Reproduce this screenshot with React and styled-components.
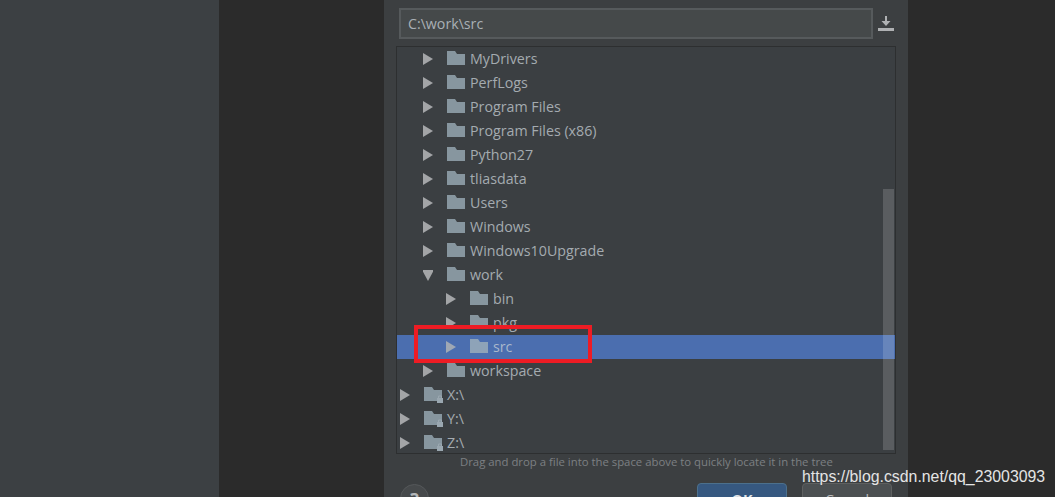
import React from "react";
import styled, { createGlobalStyle } from "styled-components";

const treeRows = [
    { name: "MyDrivers", depth: 1 },
    { name: "PerfLogs", depth: 1 },
    { name: "Program Files", depth: 1 },
    { name: "Program Files (x86)", depth: 1 },
    { name: "Python27", depth: 1 },
    { name: "tliasdata", depth: 1 },
    { name: "Users", depth: 1 },
    { name: "Windows", depth: 1 },
    { name: "Windows10Upgrade", depth: 1 },
    { name: "work", depth: 1, open: true },
    { name: "bin", depth: 2 },
    { name: "pkg", depth: 2 },
    { name: "src", depth: 2, selected: true },
    { name: "workspace", depth: 1 },
    { name: "X:\\", depth: 0, locked: true },
    { name: "Y:\\", depth: 0, locked: true },
    { name: "Z:\\", depth: 0, locked: true },
];

const Global = createGlobalStyle`
    html, body {
        margin: 0;
        height: 100%;
        overflow: hidden;
        background: #2b2b2b;
    }
`;

const Page = styled.div`
    display: grid;
    grid-template-columns: 219px 165px 524px 147px;
    width: 1055px;
    height: 497px;
    overflow: hidden;
    position: relative;
    font-family: "Open Sans", "Noto Sans", sans-serif;
`;

const Sidebar = styled.div`
    background: #3c4043;
`;

const Backdrop = styled.div`
    background: #2b2b2b;
`;

const Dialog = styled.div`
    background: #3c3f41;
    height: 497px;
    padding: 8px 12px 0 12px;
    box-sizing: border-box;
    overflow: hidden;
`;

const PathRow = styled.div`
    display: flex;
    align-items: center;
    height: 31px;
    padding-left: 3px;
`;

const PathInput = styled.div`
    width: 474px;
    height: 31px;
    box-sizing: border-box;
    border: 2px solid #565a5c;
    background: #45494a;
    color: #a9b0b5;
    font-size: 14.2px;
    line-height: 28px;
    padding-left: 7px;
`;

const SaveButton = styled.svg`
    width: 16px;
    height: 16px;
    margin-left: 5px;
    margin-top: 1px;
    fill: #afb1b3;
`;

const Tree = styled.div`
    position: relative;
    width: 500px;
    height: 408px;
    margin-top: 7px;
    box-sizing: border-box;
    border: 1px solid #2d2f30;
    background: #3b3f42;
    overflow: hidden;
`;

const Row = styled.div`
    display: flex;
    align-items: center;
    height: 24px;
    padding-left: ${(p) => 3 + p.$depth * 23}px;
    background: ${(p) => (p.$selected ? "#4b6eaf" : "transparent")};
    color: ${(p) => (p.$selected ? "#a9b8cc" : "#a4abb0")};
    font-size: 14.25px;
`;

const RowLabel = styled.span`
    margin-bottom: 2px;
`;

const Arrow = styled.svg`
    width: 10px;
    height: 12px;
    margin-right: 14px;
    flex: none;
    fill: ${(p) => (p.$selected ? "#9fa8b4" : "#a3a5a7")};
`;

const FolderIcon = styled.svg`
    width: 18px;
    height: 15px;
    margin-right: 5px;
    flex: none;
    margin-top: -2px;
    overflow: visible;
`;

const Scrollbar = styled.div`
    position: absolute;
    top: 142px;
    left: 486px;
    width: 11px;
    height: 261px;
    background: rgba(255, 255, 255, 0.16);
`;

const Highlight = styled.div`
    position: absolute;
    top: 278px;
    left: 17px;
    width: 178px;
    height: 38px;
    box-sizing: border-box;
    border: 4px solid #ed1c24;
`;

const Hint = styled.div`
    margin-left: 64px;
    height: 16px;
    color: #7d8083;
    font-size: 11.35px;
    line-height: 16px;
    white-space: nowrap;
`;

const Footer = styled.div`
    display: flex;
    align-items: flex-start;
    margin-top: 13px;
`;

const HelpButton = styled.div`
    width: 29px;
    height: 29px;
    box-sizing: border-box;
    margin-left: 4px;
    margin-top: 1px;
    border: 1px solid #55585a;
    border-radius: 50%;
    background: #46494b;
    color: #b4b7b9;
    font-size: 18px;
    font-weight: 700;
    line-height: 28px;
    text-align: center;
`;

const Button = styled.div`
    width: 90px;
    height: 32px;
    box-sizing: border-box;
    border: 1px solid ${(p) => (p.$primary ? "#4c708c" : "#5e6060")};
    border-radius: 4px;
    background: ${(p) => (p.$primary ? "#365880" : "#4c5052")};
    color: ${(p) => (p.$primary ? "#dfe1e5" : "#bbbbbb")};
    font-size: 14.3px;
    font-weight: ${(p) => (p.$primary ? 700 : 400)};
    line-height: 31px;
    text-align: center;
    margin-left: ${(p) => (p.$primary ? "268px" : "15px")};
`;

const Watermark = styled.div`
    position: absolute;
    left: 802px;
    top: 467px;
    color: #e4e4e4;
    font-family: "Liberation Sans", sans-serif;
    font-size: 15.85px;
    line-height: 20px;
    white-space: nowrap;
`;

const Folder = ({ selected, locked }) => (
    <FolderIcon viewBox="0 0 18 15">
        <path
            d="M0 0h8l2 3h8v11H0z"
            fill={selected ? "#8ea3b8" : "#87969f"}
        />
        {locked && (
            <g>
                <rect x="13" y="11" width="6" height="5" fill="#9aa7b0" />
                <path d="M14.500 11V9h3v2" fill="none" stroke="#9aa7b0" />
            </g>
        )}
    </FolderIcon>
);

const TreeRow = ({ name, depth, open, selected, locked }) => (
    <Row $depth={depth} $selected={selected}>
        <Arrow viewBox="0 0 10 12" $selected={selected}>
            {open ? <path d="M-1 1h12L5 12z" /> : <path d="M0 0l10 6-10 6z" />}
        </Arrow>
        <Folder selected={selected} locked={locked} />
        <RowLabel>{name}</RowLabel>
    </Row>
);

export default function App() {
    return (
        <Page>
            <Global />
            <Sidebar />
            <Backdrop />
            <Dialog>
                <PathRow>
                    <PathInput>C:\work\src</PathInput>
                    <SaveButton viewBox="0 0 16 16">
                        <path d="M7 0h2v5h3.500L8 10 3.500 5H7z" />
                        <rect x="0" y="12" width="16" height="3" />
                    </SaveButton>
                </PathRow>
                <Tree>
                    {treeRows.map((row) => (
                        <TreeRow key={row.name} {...row} />
                    ))}
                    <Scrollbar />
                    <Highlight />
                </Tree>
                <Hint>Drag and drop a file into the space above to quickly locate it in the tree</Hint>
                <Footer>
                    <HelpButton>?</HelpButton>
                    <Button $primary>OK</Button>
                    <Button>Cancel</Button>
                </Footer>
            </Dialog>
            <Backdrop />
            <Watermark>https://blog.csdn.net/qq_23003093</Watermark>
        </Page>
    );
}
